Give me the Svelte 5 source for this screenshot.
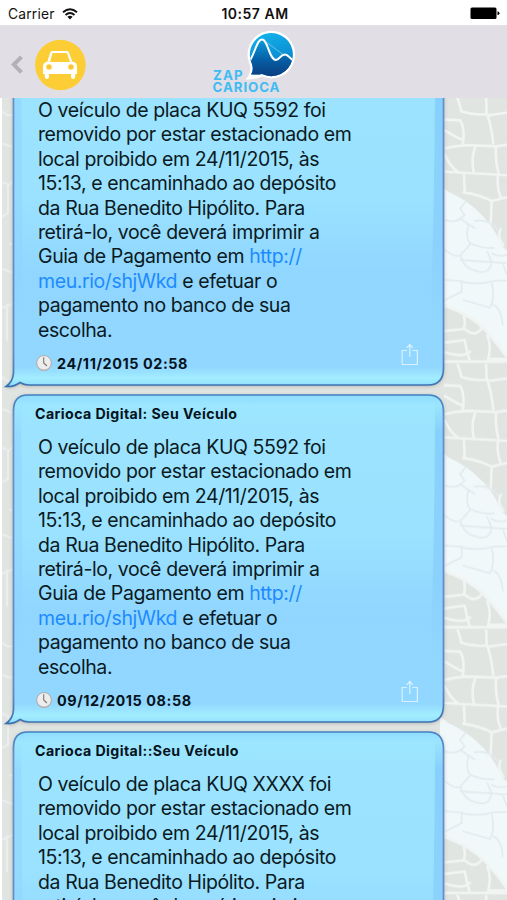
<script>
  const body = (plate) => [
    [{ t: `O veículo de placa KUQ ${plate} foi` }],
    [{ t: 'removido por estar estacionado em' }],
    [{ t: 'local proibido em 24/11/2015, às' }],
    [{ t: '15:13, e encaminhado ao depósito' }],
    [{ t: 'da Rua Benedito Hipólito. Para' }],
    [{ t: 'retirá-lo, você deverá imprimir a' }],
    [{ t: 'Guia de Pagamento em ' }, { t: 'http://', link: true }],
    [{ t: 'meu.rio/shjWkd', link: true }, { t: ' e efetuar o' }],
    [{ t: 'pagamento no banco de sua' }],
    [{ t: 'escolha.' }]
  ];
  const messages = [
    { title: 'Carioca Digital: Seu Veículo', lines: body('5592'), date: '24/11/2015 02:58' },
    { title: 'Carioca Digital: Seu Veículo', lines: body('5592'), date: '09/12/2015 08:58' },
    { title: 'Carioca Digital::Seu Veículo', lines: body('XXXX'), date: '09/12/2015 08:58' }
  ];
  const bubble =
    'M22.500 1H423Q438.500 1 438.500 18V311Q438.500 328 423 328H24Q19 328 15 325.500Q9 330 1 329.500Q8 325 8.500 316V17Q8.500 1 22.500 1Z';
</script>

<div class="screen">
  <header class="status">
    <div class="carrier">
      <span>Carrier</span>
      <svg width="16" height="12" viewBox="0 0 16 12" fill="none" stroke="#111" stroke-width="1.9">
        <path d="M1 4.200Q8 -1.800 15 4.200M3.500 6.900Q8 3.200 12.500 6.900" />
        <path d="M5.400 8.800Q8 6.700 10.600 8.800L8 11.500Z" fill="#111" stroke="none" />
      </svg>
    </div>
    <span class="clock">10:57 AM</span>
    <svg class="battery" width="31" height="13" viewBox="0 0 31 13">
      <rect x="1.500" y="0.500" width="26" height="11.500" rx="1.500" />
      <path d="M28.500 4.300Q30.500 4.800 30.500 6.300T28.500 8.300Z" />
    </svg>
  </header>

  <nav class="bar">
    <svg class="back" width="12" height="20" viewBox="0 0 12 20" fill="none" stroke="#b3b1b5" stroke-width="4">
      <path d="M10.500 1.800L2.800 9.600L10.500 17.400" />
    </svg>
    <svg class="car" width="52" height="52" viewBox="0 0 52 52">
      <circle cx="26.400" cy="26" r="25.300" fill="#fccd34" />
      <path
        fill="#fff"
        fill-rule="evenodd"
        d="M17 12.500Q17.700 12 19 12H32.500Q34 12 34.700 13L38.500 23H40Q43 24 43 28V35H41.200V38Q41 40 39.200 40T37 38V35H15V38Q14.800 40 13 40T10.700 38V35H9V28Q9 24 12 23H13.200L16 14Q16.300 13 17 12.500ZM18.500 14L16 23H36L33 14ZM15 25.200A2.800 2.800 0 1 0 15 30.800A2.800 2.800 0 1 0 15 25.200ZM37 25.200A2.800 2.800 0 1 0 37 30.800A2.800 2.800 0 1 0 37 25.200Z"
      />
      <circle cx="15" cy="28" r="1.400" fill="#fbbf3a" /><circle cx="37" cy="28" r="1.400" fill="#fbbf3a" />
    </svg>
    <svg class="logo" width="90" height="66" viewBox="210 30 90 66">
      <defs>
        <linearGradient id="sky" x1="0" y1="0" x2="0.3" y2="1">
          <stop offset="0" stop-color="#12b8f0" /><stop offset="1" stop-color="#0a7cc4" />
        </linearGradient>
        <linearGradient id="hill" x1="0" y1="0" x2="0" y2="1">
          <stop offset="0" stop-color="#0a9bdc" /><stop offset="0.550" stop-color="#075da3" /><stop offset="1" stop-color="#0b3a7c" />
        </linearGradient>
        <clipPath id="balloon">
          <path d="M271.300 33A21.600 21.600 0 1 1 262 74.100Q257 75 251 74.300Q254 70.500 252 64A21.600 21.600 0 0 1 271.300 33Z" />
        </clipPath>
      </defs>
      <circle cx="271.300" cy="54.600" r="23.800" fill="#fff" />
      <path fill="#fff" d="M249.500 62Q252.500 72.500 245.500 79.500Q254 80 262 76.500Z" />
      <g clip-path="url(#balloon)">
        <rect x="248" y="32" width="47" height="46" fill="url(#sky)" />
        <path fill="url(#hill)" d="M248 64C256 52 256.500 39.500 262 39.500C268 39.500 269 60 276 60C280 60 280 54.500 285 54.500C289 54.500 290 60 295 61V78H248Z" />
        <path fill="none" stroke="#fff" stroke-width="2" d="M248 64C256 52 256.500 39.500 262 39.500C268 39.500 269 60 276 60C280 60 280 54.500 285 54.500C289 54.500 290 60 295 61" />
        <path fill="none" stroke="#a5ddf3" stroke-width="0.600" d="M265 41L283 54.500" />
      </g>
      <g fill="#3fbcf3" font-family="Inter, 'Liberation Sans', sans-serif" font-weight="700" font-size="13.300">
        <text x="213" y="79.500" textLength="29.500">ZAP</text>
        <text x="212.500" y="92" textLength="67">CARIOCA</text>
      </g>
    </svg>
  </nav>

  <main class="chat">
    <svg class="stones" width="507" height="802" viewBox="0 0 507 802">
      <defs>
        <pattern id="tile" width="507" height="265.700" patternUnits="userSpaceOnUse">
          <rect width="507" height="266" fill="#e0e5e1" />
          <g transform="translate(400 -3) scale(0.3333)" fill="none" stroke-linecap="round">
            <path fill="#f1f8fa" d="M120 270L145 290Q200 315 235 350Q275 385 300 440Q310 465 330 468V800Q300 760 260 710Q200 655 120 630Z" />
            <g stroke="#f0f5f4" stroke-width="8">
              <path d="M168 0Q180 25 184 49Q220 62 262 57M258 0L260 55Q272 80 280 145M135 74L180 76Q196 100 188 150M135 106Q165 125 188 135M262 61L330 52M135 160Q165 152 200 150L290 154L330 148M225 158Q212 190 222 235M288 158Q285 195 296 238M135 180Q150 215 175 232M135 230L330 241M192 238L194 285M294 241Q290 280 302 305M190 292Q240 300 275 318L330 305M275 318L272 385M302 403Q290 425 310 450" />
              <path d="M135 632Q215 660 258 708T330 800M192 664Q198 688 190 702L135 708M192 700Q225 732 248 697M194 735L135 743M194 735Q200 768 210 800M210 770Q190 790 135 772M262 722Q275 750 265 792L330 792M0 800H330" />
            </g>
            <g stroke="#e2ebee" stroke-width="5">
              <path d="M135 375Q170 388 194 360L180 340L198 318M180 370L224 400M205 390Q195 430 212 446Q250 462 282 458M224 378Q265 370 295 405M135 465Q165 490 182 480L212 446M182 482Q190 520 230 528Q270 540 275 500L262 470M182 495L330 505M135 555L185 558V590L135 615M185 560Q230 572 280 558L330 556M276 565Q285 610 270 638L190 615M280 630Q305 640 308 690M275 475Q300 490 330 475M310 510Q320 540 330 555" />
            </g>
          </g>
          <g fill="none" stroke="#eceeed" stroke-width="2">
            <path d="M0 12L7 17H15M0 45L13 49M0 83L9 87L14 82M8 87V115L0 120M9 146H14M0 170L14 175M0 211L14 205M7 206V243" />
          </g>
        </pattern>
      </defs>
      <rect width="507" height="802" fill="url(#tile)" />
      <rect width="2" height="802" fill="#fff" />
    </svg>

    <svg width="0" height="0" class="defs">
      <defs>
        <linearGradient id="fill" x1="0" y1="0" x2="0" y2="1">
          <stop offset="0" stop-color="#8edcff" /><stop offset="0.030" stop-color="#9ce6ff" /><stop offset="0.120" stop-color="#9be3ff" />
          <stop offset="0.420" stop-color="#9ae2ff" /><stop offset="0.660" stop-color="#90d6ff" /><stop offset="0.940" stop-color="#92d7ff" />
          <stop offset="0.975" stop-color="#a2eeff" /><stop offset="1" stop-color="#8edcfb" />
        </linearGradient>
        <linearGradient id="side" x1="0" y1="0" x2="0" y2="1">
          <stop offset="0" stop-color="#83ccfb" stop-opacity="0" /><stop offset="0.100" stop-color="#83cbfc" />
          <stop offset="0.600" stop-color="#8acffd" /><stop offset="0.900" stop-color="#8ed4ff" stop-opacity="0" />
        </linearGradient>
        <linearGradient id="edge" x1="0" y1="0" x2="0" y2="1">
          <stop offset="0" stop-color="#4480c2" /><stop offset="0.080" stop-color="#6490cd" />
          <stop offset="0.900" stop-color="#5c8ac9" /><stop offset="1" stop-color="#3b72b0" />
        </linearGradient>
      </defs>
    </svg>

    <div class="list">
      {#each messages as m}
        <article class="card">
          <svg class="bubble" width="446" height="336" viewBox="0 0 446 336">
            <path class="shade" d={bubble} />
            <path d={bubble} fill="url(#fill)" />
            <path fill="url(#side)" d="M430 8Q438 12 438 20V310H424Q430 150 430 8Z" opacity="0.800" />
            <path fill="url(#side)" d="M9.500 20V310H17Q18 150 16 10Q9.500 12 9.500 20Z" opacity="0.350" />
            <path d={bubble} fill="none" stroke="url(#edge)" stroke-width="1.700" />
          </svg>
          <div class="content">
            <h2>{m.title}</h2>
            <div class="text">
              {#each m.lines as line}
                <div class="line">{#each line as s}<span class:link={s.link}>{s.t}</span>{/each}</div>
              {/each}
            </div>
            <footer>
              <svg width="18" height="18" viewBox="0 0 18 18">
                <circle cx="9" cy="9.300" r="8" fill="#b9bcc0" />
                <circle cx="9" cy="8.800" r="7.300" fill="#ededed" stroke="#a7abb0" stroke-width="0.900" />
                <path d="M8.700 3.200V9L12 12" fill="none" stroke="#777" stroke-width="1.100" />
              </svg>
              <time>{m.date}</time>
              <svg class="share" width="18" height="23" viewBox="0 0 18 23" fill="none" stroke="#d9f2ff" stroke-width="1.200">
                <path d="M6 7.500H1.200V21.500H16.400V7.500H11.500M8.800 14V2M5.800 4.800L8.800 1.500L11.800 4.800" />
              </svg>
            </footer>
          </div>
        </article>
      {/each}
    </div>
  </main>
</div>

<style>
  .screen {
    width: 507px;
    height: 900px;
    overflow: hidden;
    display: flex;
    flex-direction: column;
    background: #e1e6e3;
    font-family: Inter, 'Liberation Sans', sans-serif;
    color: #0b1a22;
  }
  .status {
    box-sizing: border-box;
    height: 25px;
    flex: none;
    display: grid;
    grid-template-columns: 1fr auto 1fr;
    align-items: center;
    padding: 2px 7px 0 8px;
    background: #fff;
    color: #111;
    font-size: 13.8px;
  }
  .carrier {
    display: flex;
    align-items: center;
    gap: 7px;
    letter-spacing: 0.2px;
  }
  .clock {
    font-weight: 600;
    font-size: 14px;
    letter-spacing: 0.5px;
    padding-left: 2px;
  }
  .battery {
    justify-self: end;
  }
  .bar {
    height: 73px;
    flex: none;
    display: flex;
    align-items: center;
    background: #e2dee6;
  }
  .back {
    margin: 6px 0 0 11px;
  }
  .car {
    margin: 6px 0 0 11px;
  }
  .logo {
    margin: 3px 0 0 124px;
  }
  .chat {
    position: relative;
    height: 802px;
    flex: none;
    overflow: hidden;
  }
  .stones,
  .defs {
    position: absolute;
    left: 0;
    top: 0;
  }
  .list {
    position: relative;
    margin: -41px 0 0 5px;
  }
  .card {
    position: relative;
    width: 440px;
    height: 337px;
  }
  .bubble {
    position: absolute;
    left: 0;
    top: 0;
    overflow: visible;
  }
  .shade {
    fill: #8b8089;
    filter: drop-shadow(0 1.5px 2px #8f7f8799);
  }
  .content {
    position: relative;
    padding: 10.5px 0 0 30px;
  }
  h2 {
    margin: 0;
    height: 18px;
    line-height: 18px;
    font-size: 14.2px;
    font-weight: 700;
    letter-spacing: 0.4px;
    color: #05141c;
  }
  .text {
    padding: 12.5px 0 0 3px;
    font-size: 19.5px;
    line-height: 24.42px;
    letter-spacing: -0.4px;
  }
  .line {
    white-space: pre;
    height: 24.42px;
  }
  .link {
    color: #1d8bff;
  }
  footer {
    display: flex;
    align-items: center;
    margin-top: 11px;
    height: 20px;
    font-size: 14.4px;
    font-weight: 700;
    letter-spacing: 0.57px;
    color: #05141c;
  }
  time {
    margin-left: 4px;
  }
  .share {
    margin: -17px 26px 0 auto;
  }
</style>
